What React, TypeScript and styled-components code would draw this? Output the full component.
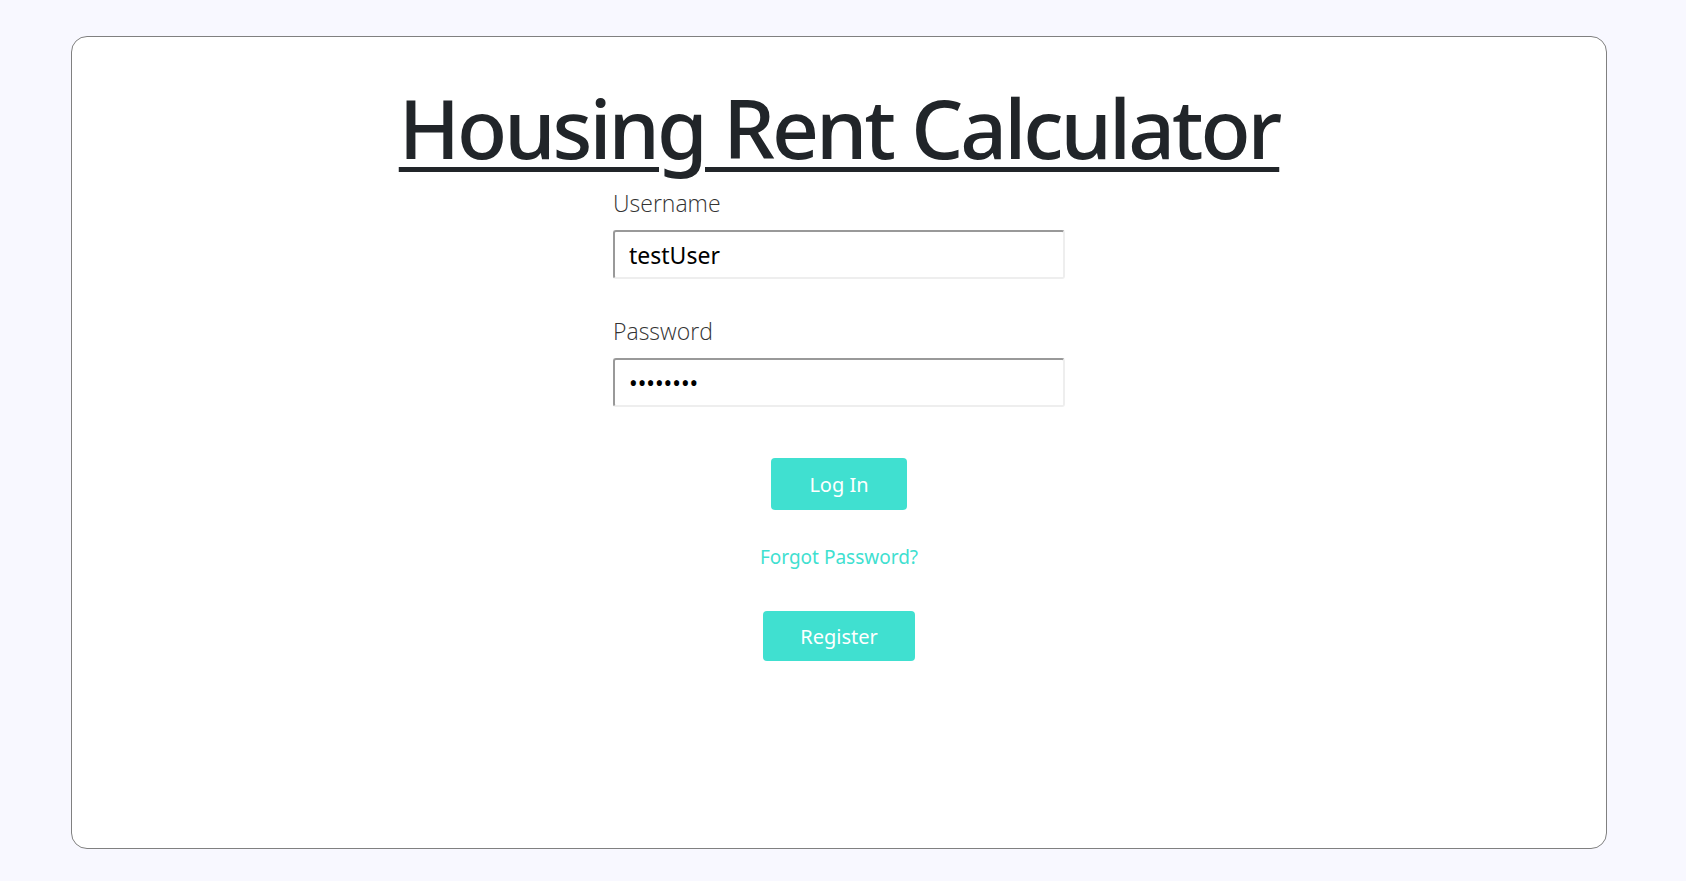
import React from "react";
import styled, { createGlobalStyle } from "styled-components";

const Global = createGlobalStyle`
  html, body { margin: 0; padding: 0; background: #f8f8ff; }
  body { font-family: "Noto Sans", "Open Sans", sans-serif; color: #212529; }
  * { box-sizing: border-box; }
`;

const Page = styled.div`
  padding: 36px 79px 32px 71px;
`;

const Card = styled.main`
  height: 813px;
  background: #ffffff;
  border: 1px solid #808080;
  border-radius: 16px;
  display: flex;
  flex-direction: column;
  align-items: center;
`;

const Title = styled.h1`
  margin: 41px 0 0;
  font-size: 82px;
  font-weight: 500;
  letter-spacing: -3px;
  line-height: 1.2;
  text-decoration: underline;
  text-decoration-thickness: 5px;
  text-underline-offset: 8px;
  color: #212529;
`;

const Form = styled.form`
  width: 452px;
  margin-top: 14px;
  display: flex;
  flex-direction: column;
`;

const Label = styled.label`
  font-family: "Open Sans", "Noto Sans", sans-serif;
  font-size: 23px;
  font-weight: 300;
  color: #333;
  line-height: 26px;
  margin-bottom: 14px;
`;

const Input = styled.input<{ $gap?: number }>`
  height: 49px;
  width: 100%;
  padding: 0 14px;
  font-family: "Noto Sans", sans-serif;
  font-size: 23px;
  color: #000;
  border-width: 2px;
  border-style: solid;
  border-color: #999 #eee #eee #999;
  border-radius: 3px;
  margin-bottom: ${(p) => p.$gap ?? 0}px;
  outline: none;
`;

const Actions = styled.div`
  display: flex;
  flex-direction: column;
  align-items: center;
  margin-top: 51px;
`;

const Button = styled.button<{ $w: number; $h: number }>`
  width: ${(p) => p.$w}px;
  height: ${(p) => p.$h}px;
  background: #40e0d0;
  color: #fff;
  border: none;
  border-radius: 4px;
  font-family: "Noto Sans", sans-serif;
  font-size: 20px;
  cursor: pointer;
`;

const Link = styled.a`
  color: #40e0d0;
  font-size: 19px;
  text-decoration: none;
  margin: 33px 0 40px;
  line-height: 28px;
`;

export default function App() {
  return (
    <>
      <Global />
      <Page>
        <Card>
          <Title>Housing Rent Calculator</Title>
          <Form onSubmit={(e) => e.preventDefault()}>
            <Label htmlFor="u">Username</Label>
            <Input id="u" defaultValue="testUser" $gap={39} />
            <Label htmlFor="p">Password</Label>
            <Input id="p" type="password" defaultValue="password" />
          </Form>
          <Actions>
            <Button $w={136} $h={52}>Log In</Button>
            <Link href="#">Forgot Password?</Link>
            <Button $w={152} $h={50}>Register</Button>
          </Actions>
        </Card>
      </Page>
    </>
  );
}
